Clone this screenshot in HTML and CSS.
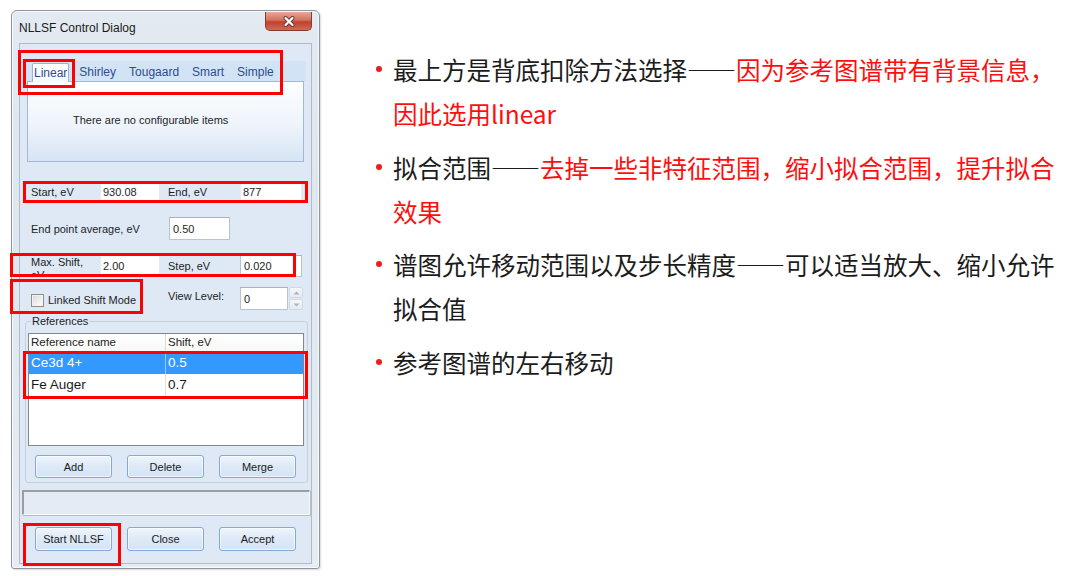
FILE: index.html
```html
<!DOCTYPE html>
<html lang="zh-CN">
<head>
<meta charset="utf-8">
<title>NLLSF Control Dialog</title>
<link rel="stylesheet" href="styles.css">
</head>
<body>
<div class="page">
  <div class="window">
    <div class="titlebar">
      <span class="title">NLLSF Control Dialog</span>
      <div class="close">
        <svg width="12" height="11" viewBox="0 0 12 11">
          <path d="M2.5 2 L9.5 9 M9.5 2 L2.5 9" stroke="#6b3a33" stroke-width="4" stroke-linecap="round"/>
          <path d="M2.5 2 L9.5 9 M9.5 2 L2.5 9" stroke="#ffffff" stroke-width="2.2" stroke-linecap="round"/>
        </svg>
      </div>
    </div>
    <div class="client">
      <div class="tabs">
        <div class="tabstrip">
          <span class="tab sel">Linear</span>
          <span class="tab">Shirley</span>
          <span class="tab">Tougaard</span>
          <span class="tab">Smart</span>
          <span class="tab">Simple</span>
        </div>
        <div class="panel">There are no configurable items</div>
      </div>

      <div class="row row-start">
        <span class="lbl w69">Start, eV</span>
        <span class="field w60">930.08</span>
        <span class="lbl w72 ml8">End, eV</span>
        <span class="field w62">877</span>
      </div>

      <div class="row row-end">
        <span class="lbl w138">End point average, eV</span>
        <span class="field boxed w61">0.50</span>
      </div>

      <div class="row row-max">
        <span class="lbl w69 clip">Max. Shift, eV</span>
        <span class="field w60">2.00</span>
        <span class="lbl w72 ml8">Step, eV</span>
        <span class="field boxed w62">0.020</span>
      </div>

      <div class="row row-linked">
        <span class="chkwrap">
          <span class="chk"></span>
          <span class="chklbl">Linked Shift Mode</span>
        </span>
        <span class="lbl w72 vl">View Level:</span>
        <span class="field boxed w48">0</span>
        <span class="spin">
          <span class="spinbtn"><svg width="7" height="4" viewBox="0 0 7 4"><path d="M0.5 3.5 L3.5 0.5 L6.5 3.5 Z" fill="#a9b3bf"/></svg></span>
          <span class="spinbtn"><svg width="7" height="4" viewBox="0 0 7 4"><path d="M0.5 0.5 L3.5 3.5 L6.5 0.5 Z" fill="#a9b3bf"/></svg></span>
        </span>
      </div>

      <fieldset class="group">
        <legend>References</legend>
        <div class="list">
          <div class="lhead">
            <span class="c1">Reference name</span>
            <span class="c2">Shift, eV</span>
          </div>
          <div class="lrow selected">
            <span class="c1">Ce3d 4+</span>
            <span class="c2">0.5</span>
          </div>
          <div class="lrow">
            <span class="c1">Fe Auger</span>
            <span class="c2">0.7</span>
          </div>
        </div>
        <div class="btnrow">
          <span class="btn">Add</span>
          <span class="btn">Delete</span>
          <span class="btn">Merge</span>
        </div>
      </fieldset>

      <div class="status"></div>

      <div class="btnrow bottom">
        <span class="btn">Start NLLSF</span>
        <span class="btn">Close</span>
        <span class="btn">Accept</span>
      </div>
    </div>
  </div>

  <ul class="notes">
    <li><span class="dot"></span><span class="txt">最上方是背底扣除方法选择——<em class="red">因为参考图谱带有背景信息，</em><br><em class="red">因此选用linear</em></span></li>
    <li><span class="dot"></span><span class="txt">拟合范围——<em class="red">去掉一些非特征范围，缩小拟合范围，提升拟合</em><br><em class="red">效果</em></span></li>
    <li><span class="dot"></span><span class="txt">谱图允许移动范围以及步长精度——可以适当放大、缩小允许<br>拟合值</span></li>
    <li><span class="dot"></span><span class="txt">参考图谱的左右移动</span></li>
  </ul>

  <div class="anno a-tabs"></div>
  <div class="anno a-linear"></div>
  <div class="anno a-start"></div>
  <div class="anno a-max"></div>
  <div class="anno a-linked"></div>
  <div class="anno a-list"></div>
  <div class="anno a-run"></div>
</div>
</body>
</html>
```

FILE: styles.css
```css
* { box-sizing: border-box; }
html, body { margin: 0; padding: 0; background: #ffffff; }
body {
  width: 1080px;
  height: 576px;
  overflow: hidden;
  font-family: "Liberation Sans", Arial, sans-serif;
}
.page {
  position: relative;
  display: flex;
  align-items: flex-start;
  padding: 10px 0 0 11px;
  height: 576px;
}

/* window frame */
.window {
  flex: none;
  width: 309px;
  height: 559px;
  border: 1px solid #8c96a2;
  border-radius: 6px 6px 3px 3px;
  background: linear-gradient(#e4eaf1, #dfe6ee 30%, #e7ecf2 100%);
  display: flex;
  flex-direction: column;
  box-shadow: inset 0 0 0 1px rgba(255,255,255,0.7), 1px 1px 2px rgba(0,0,0,0.15);
}
.titlebar {
  flex: none;
  height: 32px;
  display: flex;
  align-items: flex-start;
  padding-left: 7px;
}
.title {
  margin-top: 10px;
  font-size: 12px;
  line-height: 14px;
  color: #1b1b1b;
}
.close {
  margin-left: auto;
  margin-right: 7px;
  margin-top: 1px;
  width: 47px;
  height: 19px;
  border: 1px solid #8a3b31;
  border-top: none;
  border-radius: 0 0 5px 5px;
  background: linear-gradient(#e9a898, #d4715f 45%, #c0412f 55%, #cf6a4e);
  display: flex;
  align-items: center;
  justify-content: center;
}

/* client area */
.client {
  flex: 1;
  margin: 0 7px 4px 7px;
  border: 1px solid #aebccc;
  background: #dfe9f6;
  font-size: 11px;
  color: #1e1e1e;
}

.tabs { margin: 17px 0 0 4px; }
.tabstrip {
  width: 282px;
  height: 20px;
  background: #d3e3f6;
  display: flex;
  align-items: flex-end;
  padding-left: 8px;
  gap: 13px;
}
.tab {
  font-size: 12px;
  line-height: 18px;
  height: 18px;
  color: #2b4e8c;
}
.tab.sel {
  position: relative;
  height: 19px;
  margin-bottom: -1px;
  margin-right: -3px;
  padding: 0 1px;
  border: 1px solid #9db3d0;
  border-bottom: none;
  border-radius: 2px 2px 0 0;
  background: linear-gradient(#ffffff, #f6f9fd);
}
.panel {
  margin-left: 3px;
  width: 277px;
  height: 81px;
  border: 1px solid #a6b8cf;
  background: linear-gradient(#fdfeff, #eef4fb 55%, #d6e4f4);
  padding: 31px 0 0 45px;
  font-size: 11px;
  line-height: 14px;
  color: #1e1e1e;
}

/* form rows */
.row {
  display: flex;
  align-items: center;
  padding-left: 11px;
  font-size: 11px;
  line-height: 14px;
}
.row-start { margin-top: 19px; height: 22px; }
.row-end { margin-top: 14px; height: 23px; }
.row-max { margin-top: 15px; height: 22px; }
.row-linked { margin-top: 10px; height: 23px; align-items: flex-start; }

.lbl { flex: none; white-space: nowrap; }
.w69 { width: 69px; }
.w72 { width: 72px; }
.w138 { width: 138px; }
.ml8 { margin-left: 8px; }
.lbl.clip {
  align-self: flex-start;
  height: 22px;
  overflow: hidden;
  white-space: normal;
  line-height: 13px;
  padding: 1px 8px 0 0;
}
.vl { margin-top: 2px; }

.field {
  flex: none;
  height: 100%;
  background: #ffffff;
  border: 1px solid #e6ecf3;
  padding-left: 2px;
  display: flex;
  align-items: center;
  font-size: 11px;
}
.field.boxed { border: 1px solid #b9c2cd; border-top-color: #a9b1bc; padding-left: 3px; }
.w60 { width: 60px; }
.w61 { width: 61px; }
.w62 { width: 62px; }
.w48 { width: 48px; }

.chkwrap {
  flex: none;
  width: 137px;
  margin-top: 6px;
  display: flex;
  align-items: center;
}
.chk {
  flex: none;
  width: 13px;
  height: 13px;
  border: 1px solid #8e8f8f;
  background: linear-gradient(135deg, #d8d8d8, #f4f4f4 70%, #ffffff);
  box-shadow: inset 0 0 0 1px #f2f2f2;
}
.chklbl { margin-left: 4px; white-space: nowrap; }

.spin {
  flex: none;
  margin-left: 1px;
  width: 14px;
  height: 23px;
  display: flex;
  flex-direction: column;
  gap: 1px;
}
.spinbtn {
  flex: 1;
  border: 1px solid #d3dae3;
  border-radius: 2px;
  background: linear-gradient(#f4f6f9, #e6ebf1);
  display: flex;
  align-items: center;
  justify-content: center;
}

/* group box */
.group {
  margin: 4px 0 0 5px;
  width: 283px;
  padding: 0 0 4px 0;
  min-width: 0;
  border: 1px solid #c3d0df;
  border-radius: 3px;
}
.group legend {
  margin-left: 5px;
  padding: 0 1px;
  font-size: 11px;
  line-height: 14px;
  color: #1e1e1e;
}
.list {
  margin: 5px 0 0 2px;
  width: 276px;
  height: 113px;
  border: 1px solid #828790;
  background: #ffffff;
}
.lhead {
  display: flex;
  height: 18px;
  border-bottom: 1px solid #e5e5e5;
  background: linear-gradient(#ffffff, #f7f8f9);
  font-size: 11.5px;
  line-height: 17px;
}
.lhead .c1 { width: 137px; padding-left: 2px; border-right: 1px solid #dcdcdc; }
.lhead .c2 { padding-left: 2px; }
.lrow {
  display: flex;
  height: 22px;
  font-size: 13.5px;
  line-height: 22px;
  color: #1a1a1a;
}
.lrow .c1 { width: 137px; padding-left: 2px; border-right: 1px solid #e2e2e2; }
.lrow .c2 { padding-left: 2px; }
.lrow.selected { background: #3399ff; color: #ffffff; }
.lrow.selected .c1 { border-right-color: #9cc9f7; }

.btnrow {
  display: flex;
  gap: 15px;
  padding-left: 9px;
  margin-top: 9px;
}
.btn {
  flex: none;
  width: 77px;
  height: 23px;
  border: 1px solid #85a8d8;
  border-radius: 3px;
  background: linear-gradient(#eef5fd, #dde9f7 50%, #d4e4f6);
  box-shadow: inset 0 0 0 1px rgba(255,255,255,0.6);
  display: flex;
  align-items: center;
  justify-content: center;
  font-size: 11px;
  color: #1b1b1b;
}
.btnrow.bottom { margin-top: 12px; padding-left: 15px; }
.btnrow.bottom .btn { height: 24px; }

.status {
  margin: 7px 0 0 2px;
  width: 288px;
  height: 25px;
  border-style: solid;
  border-width: 2px 1px 1px 2px;
  border-color: #9a9ea4 #f8fafc #f8fafc #9a9ea4;
  background: #e3ebf5;
  box-shadow: 1px 1px 0 #b3bcc7;
}

/* notes on the right */
.notes {
  list-style: none;
  margin: 38px 0 0 56px;
  padding: 0;
  font-family: "Noto Sans CJK SC", "Noto Sans", sans-serif;
}
.notes li {
  display: flex;
  margin-bottom: 9.5px;
}
.dot {
  flex: none;
  width: 6px;
  height: 6px;
  border-radius: 50%;
  background: #f21b1b;
  margin: 18px 11px 0 0;
}
.txt {
  font-size: 24.5px;
  line-height: 44px;
  color: #1c1c1c;
  white-space: nowrap;
}
.red { font-style: normal; color: #fd0f0f; }

/* red annotation boxes over the screenshot */
.anno {
  position: absolute;
  border: 3px solid #ff0000;
}
.a-tabs { left: 18px; top: 50px; width: 265px; height: 45px; }
.a-linear { left: 23px; top: 59px; width: 52px; height: 29px; }
.a-start { left: 23px; top: 181px; width: 285px; height: 22px; }
.a-max { left: 10px; top: 253px; width: 286px; height: 24px; }
.a-linked { left: 10px; top: 279px; width: 133px; height: 35px; }
.a-list { left: 23px; top: 351px; width: 285px; height: 48px; }
.a-run { left: 23px; top: 523px; width: 98px; height: 43px; }
```
